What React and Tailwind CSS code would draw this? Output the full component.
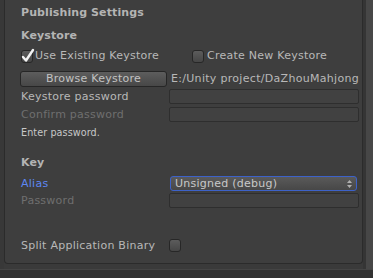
import { useState } from 'react'

const font = { fontFamily: '"DejaVu Sans", Verdana, sans-serif' }

function Checkbox({ checked }) {
  return (
    <div className="relative w-[12px] h-[13px] rounded-[3px] border border-[#272727] bg-gradient-to-b from-[#5c5c5c] to-[#464646] shrink-0">
      {checked && (
        <svg className="absolute -left-[1px] -top-[3px]" width="14" height="16" viewBox="0 0 14 16">
          <path d="M2 9 L5 12.5 L12 2" fill="none" stroke="#f2f2f2" strokeWidth="2.4" strokeLinecap="round" strokeLinejoin="round" />
        </svg>
      )}
    </div>
  )
}

function Field() {
  return <div className="flex-1 h-full border border-[#2e2e2e] bg-[#414141] rounded-[2px]" />
}

function Row({ label, dim, blue, className, children }) {
  return (
    <div className={`flex items-center ${className}`}>
      <div
        className={`w-[148px] shrink-0 text-[11px] leading-[14px] tracking-[0.25px] ${
          blue ? 'text-[#5d87f3]' : dim ? 'text-[#6f6f6f]' : 'text-[#b8b8b8]'
        }`}
      >
        {label}
      </div>
      <div className="flex-1 h-full flex pr-[3px]">{children}</div>
    </div>
  )
}

export default function App() {
  const [useExisting] = useState(true)

  return (
    <div className="w-[373px] h-[278px] bg-[#3a3a3a] flex flex-col overflow-hidden" style={font}>
      <div className="flex h-[269px]">
        <div className="w-[4px] bg-[#383838]" />
        {/* panel */}
        <div className="w-[359px] h-[264px] flex flex-col border-l border-r border-b border-[#2b2b2b] rounded-b-[4px] bg-[#3e3e3e] pl-[16px] pt-[6px]">
          <div className="h-[14px] flex items-center text-[11px] font-bold tracking-[0.1px] text-[#b4b4b4]">Publishing Settings</div>

          <div className="mt-[9px] h-[14px] flex items-center text-[11px] font-bold tracking-[0.1px] text-[#b4b4b4]">Keystore</div>

          <div className="mt-[6px] h-[14px] flex items-center text-[11px] tracking-[0.25px] text-[#b8b8b8]">
            <div className="w-[171px] flex items-center gap-[2px]">
              <Checkbox checked={useExisting} />
              <span>Use Existing Keystore</span>
            </div>
            <div className="flex items-center gap-[3px]">
              <Checkbox checked={!useExisting} />
              <span>Create New Keystore</span>
            </div>
          </div>

          <div className="mt-[8px] h-[16px] flex items-center">
            <button className="-ml-[1px] w-[147px] h-[16px] rounded-[3px] border border-[#262626] bg-gradient-to-b from-[#5d5d5d] to-[#474747] text-[11px] leading-[14px] tracking-[0.25px] text-[#c2c2c2]">
              Browse Keystore
            </button>
            <div className="ml-[4px] mr-[3px] flex-1 overflow-hidden whitespace-nowrap text-[11px] tracking-[0.3px] text-[#b8b8b8]">
              E:/Unity project/DaZhouMahjong
            </div>
          </div>

          <Row label="Keystore password" className="mt-[2px] h-[15px]">
            <Field />
          </Row>
          <Row label="Confirm password" dim className="mt-[3px] h-[15px]">
            <Field />
          </Row>

          <div className="mt-[5px] h-[12px] flex items-center text-[9.6px] tracking-[0.1px] text-[#c8c8c8]">Enter password.</div>

          <div className="mt-[17px] h-[14px] flex items-center text-[11px] font-bold tracking-[0.1px] text-[#b4b4b4]">Key</div>

          <Row label="Alias" blue className="mt-[6px] h-[15px]">
            <div className="ml-[1px] mr-[2px] flex-1 h-full flex items-center justify-between rounded-[3px] border border-[#3d62c9] bg-gradient-to-b from-[#5a5a5a] to-[#474747] pl-[4px] pr-[4px]">
              <span className="text-[11px] leading-[13px] tracking-[0.25px] text-[#c8c8c8]">Unsigned (debug)</span>
              <svg width="5" height="8" viewBox="0 0 5 8">
                <path d="M2.5 0 L5 3 L0 3 Z M0 5 L5 5 L2.5 8 Z" fill="#b0b0b0" />
              </svg>
            </div>
          </Row>
          <Row label="Password" dim className="mt-[2px] h-[15px]">
            <Field />
          </Row>

          <Row label="Split Application Binary" className="mt-[30px] h-[15px]">
            <div className="flex items-center">
              <Checkbox />
            </div>
          </Row>
        </div>
        <div className="w-[3px] bg-[#353535]" />
        <div className="w-[7px] bg-[#474747]" />
      </div>
      <div className="h-[1px] bg-[#444444]" />
      <div className="flex-1 bg-[#323232]" />
    </div>
  )
}
